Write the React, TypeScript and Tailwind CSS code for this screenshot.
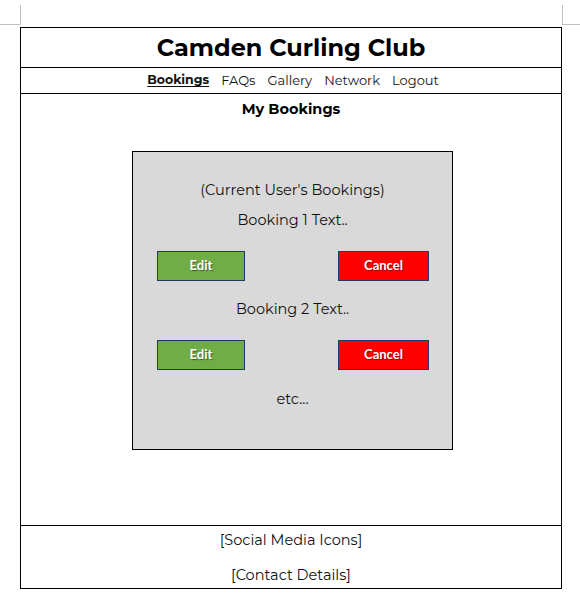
const font = "font-['Montserrat','Inter','Noto_Sans',sans-serif]";

function BookingRow({ text }: { text: string }) {
  return (
    <div className="flex flex-col">
      <p className="text-center text-[14.5px] leading-5 text-[#111]">{text}</p>
      <div className="mt-[21px] flex justify-between pl-[24px] pr-[23px]">
        <button className="h-[30px] w-[88px] border border-[#203864] bg-[#70ad47] font-['Lato','Open_Sans',sans-serif] text-[13px] font-bold text-white [text-shadow:1px_1px_1px_rgba(0,0,0,0.45)]">
          Edit
        </button>
        <button className="h-[30px] w-[91px] border border-[#203864] bg-[#ff0000] font-['Lato','Open_Sans',sans-serif] text-[13px] font-bold text-white [text-shadow:1px_1px_1px_rgba(0,0,0,0.45)]">
          Cancel
        </button>
      </div>
    </div>
  );
}

export default function App() {
  return (
    <div className={`relative h-[601px] w-[580px] bg-white pt-[27px] pl-[20px] ${font}`}>
      {/* crop marks */}
      <div className="absolute left-0 top-[5px] h-[20px] w-[21px] border-r border-b border-[#bfbfbf]" />
      <div className="absolute left-[562px] top-[5px] h-[20px] w-[18px] border-l border-b border-[#bfbfbf]" />

      <div className="flex h-[562px] w-[542px] flex-col border border-black">
        <header className="flex h-[40px] items-center justify-center border-b border-black">
          <h1 className="text-[24px] font-bold leading-none text-black">Camden Curling Club</h1>
        </header>
        <nav className="flex h-[26px] items-center justify-center gap-[12px] border-b border-black pl-[4px] text-[13px] text-[#111]">
          <a className="text-[12.5px] font-bold underline underline-offset-2">Bookings</a>
          <a>FAQs</a>
          <a>Gallery</a>
          <a>Network</a>
          <a>Logout</a>
        </nav>
        <main className="flex flex-1 flex-col">
          <h2 className="mt-[5px] self-center text-[14.5px] font-bold leading-5 text-black">My Bookings</h2>
          <section className="mt-[32px] ml-[111px] flex h-[299px] w-[321px] flex-col border border-black bg-[#d9d9d9] pt-[28px]">
            <p className="text-center text-[14.5px] leading-5 text-[#111]">(Current User's Bookings)</p>
            <div className="mt-[10px] flex flex-col gap-[18px]">
              <BookingRow text="Booking 1 Text.." />
              <BookingRow text="Booking 2 Text.." />
            </div>
            <p className="mt-[19px] text-center text-[14.5px] leading-5 text-[#111]">etc...</p>
          </section>
        </main>
        <footer className="flex h-[63px] flex-col items-center border-t border-black pt-[4px] text-[14.5px] leading-5 text-[#111]">
          <p>[Social Media Icons]</p>
          <p className="mt-[15px]">[Contact Details]</p>
        </footer>
      </div>
    </div>
  );
}
